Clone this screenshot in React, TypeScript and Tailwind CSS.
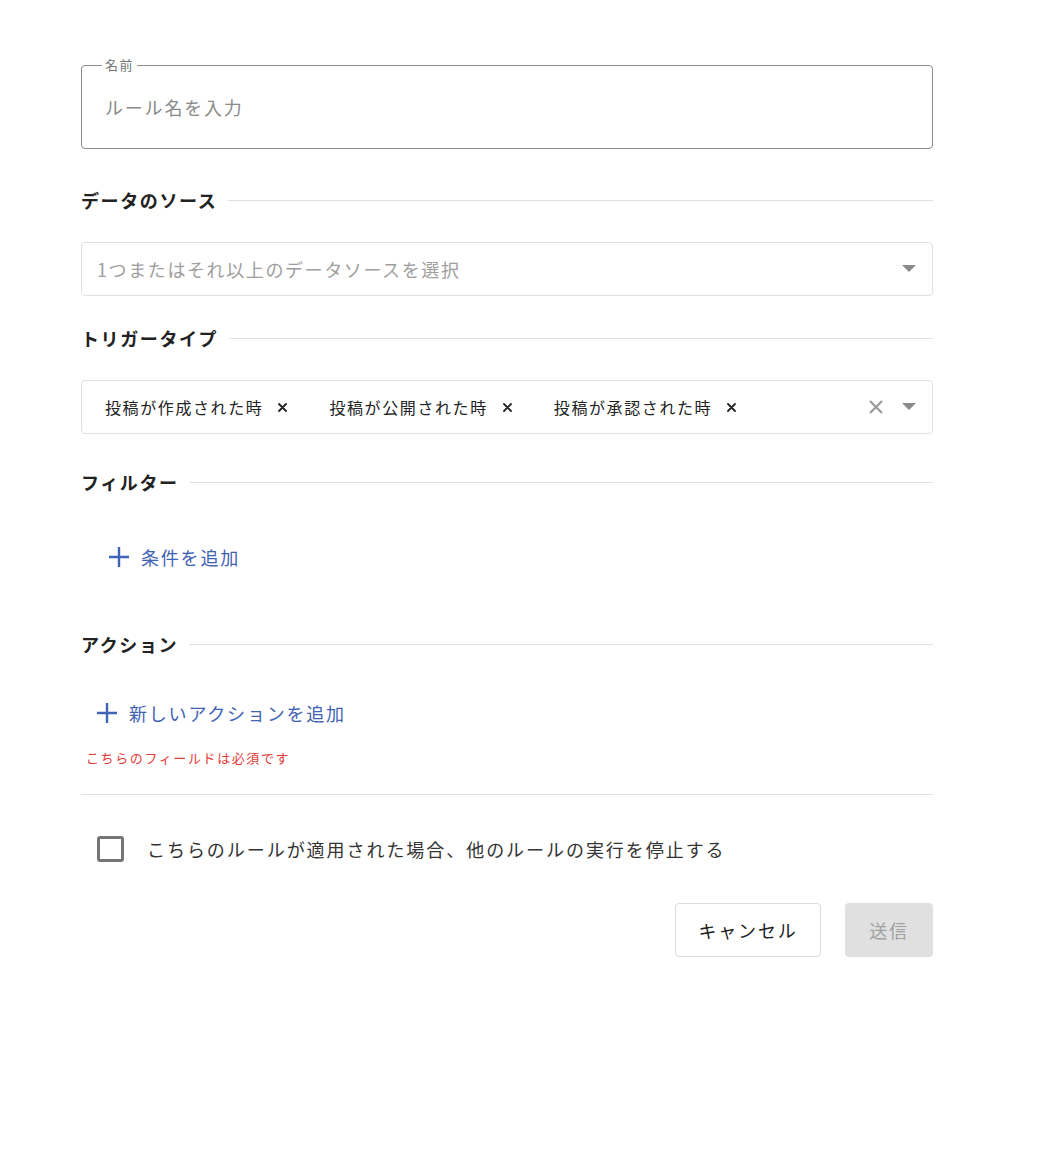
import React from 'react';

const SectionHeading: React.FC<{ title: string }> = ({ title }) => (
  <div className="flex items-center gap-[11px]">
    <h2 className="text-[18px] leading-[26px] font-bold text-[#222222]">{title}</h2>
    <div className="flex-1 h-px bg-[#e0e0e0]" />
  </div>
);

const Caret = () => (
  <svg width="14" height="8" viewBox="0 0 14 8" className="shrink-0">
    <path d="M0 0h14L7 7z" fill="#8a8a8a" />
  </svg>
);

const SmallX = () => (
  <svg width="9" height="9" viewBox="0 0 9 9" className="shrink-0">
    <path d="M1 1l7 7M8 1L1 8" stroke="#222" strokeWidth="1.8" strokeLinecap="round" />
  </svg>
);

const Plus = () => (
  <svg width="20" height="20" viewBox="0 0 20 20" className="shrink-0">
    <path d="M10 0v20M0 10h20" stroke="#3f63b5" strokeWidth="2.4" />
  </svg>
);

const triggers = ['投稿が作成された時', '投稿が公開された時', '投稿が承認された時'];

export default function App() {
  return (
    <div
      className="min-h-[1150px] bg-white tracking-[0.1em] text-[#333333]"
      style={{ fontFamily: '"Noto Sans CJK JP", "Noto Sans", sans-serif' }}
    >
      <div className="w-[852px] ml-[81px] pt-[56px] flex flex-col">
        {/* Name */}
        <fieldset className="border border-[#8c8c8c] rounded-[4px] px-[20px] pb-[15px]">
          <legend className="px-[3px] text-[13px] leading-[18px] text-[#757575]">名前</legend>
          <input
            className="mt-[7px] h-[52px] w-full pl-[3px] text-[18px] outline-none placeholder:text-[#8a8a8a] tracking-[0.1em]"
            placeholder="ルール名を入力"
          />
        </fieldset>

        {/* Data source */}
        <div className="mt-[38px]">
          <SectionHeading title="データのソース" />
        </div>
        <div className="mt-[29px] h-[54px] border border-[#e0e0e0] rounded-[4px] flex items-center pl-[15px] pr-[16px]">
          <span className="flex-1 text-[18px] leading-[26px] text-[#9e9e9e]">1つまたはそれ以上のデータソースを選択</span>
          <Caret />
        </div>

        {/* Trigger type */}
        <div className="mt-[29px]">
          <SectionHeading title="トリガータイプ" />
        </div>
        <div className="mt-[29px] h-[54px] border border-[#e0e0e0] rounded-[4px] flex items-center pl-[23px] pr-[16px]">
          <div className="flex-1 flex items-center gap-[42px]">
            {triggers.map((t) => (
              <span key={t} className="flex items-center gap-[15px]">
                <span className="text-[16px] leading-[24px] text-[#222222]">{t}</span>
                <SmallX />
              </span>
            ))}
          </div>
          <svg width="14" height="14" viewBox="0 0 14 14" className="shrink-0 mr-[19px]">
            <path d="M1 1l12 12M13 1L1 13" stroke="#9e9e9e" strokeWidth="2.4" />
          </svg>
          <Caret />
        </div>

        {/* Filter */}
        <div className="mt-[35px]">
          <SectionHeading title="フィルター" />
        </div>
        <button className="mt-[49px] ml-[28px] flex items-center gap-[12px] self-start text-[18px] leading-[26px] text-[#3f63b5] tracking-[0.1em]">
          <Plus />
          <span>条件を追加</span>
        </button>

        {/* Action */}
        <div className="mt-[61px]">
          <SectionHeading title="アクション" />
        </div>
        <button className="mt-[43px] ml-[16px] flex items-center gap-[12px] self-start text-[18px] leading-[26px] text-[#3f63b5] tracking-[0.1em]">
          <Plus />
          <span>新しいアクションを追加</span>
        </button>
        <p className="mt-[23px] ml-[5px] text-[13px] leading-[18px] text-[#e53935]">こちらのフィールドは必須です</p>

        <div className="mt-[27px] h-px bg-[#e0e0e0]" />

        {/* Checkbox */}
        <label className="mt-[41px] ml-[16px] flex items-center gap-[23px]">
          <span className="w-[27px] h-[26px] border-[3px] border-[#757575] rounded-[3px] shrink-0" />
          <span className="text-[18px] leading-[26px] text-[#333333] tracking-[1.95px]">
            こちらのルールが適用された場合、他のルールの実行を停止する
          </span>
        </label>

        {/* Buttons */}
        <div className="mt-[41px] flex justify-end gap-[24px]">
          <button className="w-[146px] h-[54px] border border-[#dcdcdc] rounded-[4px] text-[18px] text-[#222222] tracking-[0.1em]">
            キャンセル
          </button>
          <button className="w-[88px] h-[54px] rounded-[4px] bg-[#e0e0e0] text-[18px] text-[#a0a0a0] tracking-[0.1em]" disabled>
            送信
          </button>
        </div>
      </div>
    </div>
  );
}
